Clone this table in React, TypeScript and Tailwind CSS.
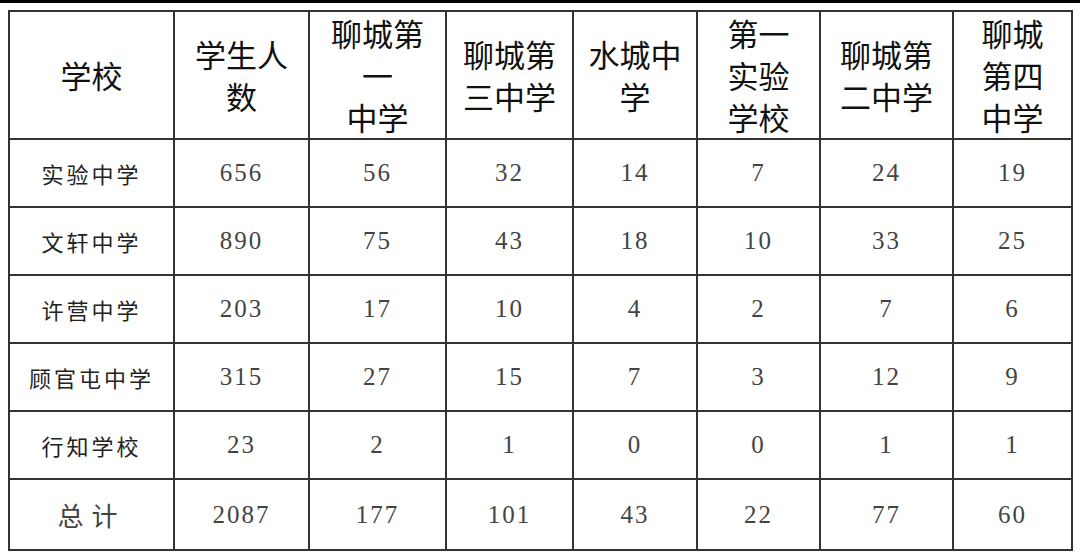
import React from "react";

const headers: string[][] = [
    ["学校"],
    ["学生人", "数"],
    ["聊城第", "一", "中学"],
    ["聊城第", "三中学"],
    ["水城中", "学"],
    ["第一", "实验", "学校"],
    ["聊城第", "二中学"],
    ["聊城", "第四", "中学"],
];

const widths = [165, 135, 137, 127, 124, 123, 133, 119];

const rows: [string, number[]][] = [
    ["实验中学", [656, 56, 32, 14, 7, 24, 19]],
    ["文轩中学", [890, 75, 43, 18, 10, 33, 25]],
    ["许营中学", [203, 17, 10, 4, 2, 7, 6]],
    ["顾官屯中学", [315, 27, 15, 7, 3, 12, 9]],
    ["行知学校", [23, 2, 1, 0, 0, 1, 1]],
];

const totals = [2087, 177, 101, 43, 22, 77, 60];

const sans = "font-['Noto_Sans_CJK_SC',sans-serif]";
const serif = "font-['Liberation_Serif','Noto_Sans_CJK_SC',serif]";

export default function App() {
    return (
        <div className="w-[1080px] h-[556px] bg-white overflow-hidden">
            <div className="h-[3px] bg-black" />
            <div className="pt-[7px] pl-[8px]">
                <table className="table-fixed border-collapse w-[1063px] border-2 border-[#333]">
                    <colgroup>
                        {widths.map((w, i) => (
                            <col key={i} style={{ width: w }} />
                        ))}
                    </colgroup>
                    <thead>
                        <tr className="h-[126px]">
                            {headers.map((lines, i) => (
                                <th
                                    key={i}
                                    className={`border-2 border-[#333] p-0 align-middle text-center font-normal text-[31px] leading-[42px] text-[#111] ${sans}`}
                                >
                                    {lines.map((l, j) => (
                                        <div key={j}>{l}</div>
                                    ))}
                                </th>
                            ))}
                        </tr>
                    </thead>
                    <tbody>
                        {rows.map(([name, vals], r) => (
                            <tr key={r} className="h-[68px]">
                                <td className={`border-2 border-[#333] p-0 text-center text-[22px] tracking-[3px] text-[#222] ${sans}`}>
                                    {name}
                                </td>
                                {vals.map((v, c) => (
                                    <td
                                        key={c}
                                        className={`border-2 border-[#333] p-0 text-center text-[25px] tracking-[2px] text-[#444] ${serif}`}
                                    >
                                        {v}
                                    </td>
                                ))}
                            </tr>
                        ))}
                        <tr className="h-[71px]">
                            <td className={`border-2 border-[#333] p-0 text-center text-[26px] tracking-[8px] text-[#444] ${sans}`}>
                                总计
                            </td>
                            {totals.map((v, c) => (
                                <td
                                    key={c}
                                    className={`border-2 border-[#333] p-0 text-center text-[25px] tracking-[2px] text-[#444] ${serif}`}
                                >
                                    {v}
                                </td>
                            ))}
                        </tr>
                    </tbody>
                </table>
            </div>
        </div>
    );
}
